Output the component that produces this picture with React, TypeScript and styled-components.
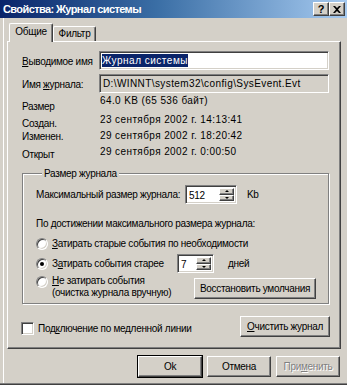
import styled, { createGlobalStyle, css } from "styled-components";

const GlobalStyle = createGlobalStyle`
  html, body {
    margin: 0;
    padding: 0;
    background: #d4d0c8;
  }
  body {
    font-family: "Liberation Sans", Arial, sans-serif;
    font-size: 10px;
    letter-spacing: -0.3px;
    color: #000;
    white-space: nowrap;
  }
`;

const raised = css`
  border-top: 1px solid #fff;
  border-left: 1px solid #fff;
  border-right: 1px solid #404040;
  border-bottom: 1px solid #404040;
  box-shadow: inset -1px -1px #808080;
`;

const sunken = css`
  border-top: 1px solid #808080;
  border-left: 1px solid #808080;
  border-right: 1px solid #fff;
  border-bottom: 1px solid #fff;
  box-shadow: inset 1px 1px #404040, inset -1px -1px #d4d0c8;
`;

const App = () => {
  return (
    <>
      <GlobalStyle />
      <Window>
        <TitleBar>
          <Title>Свойства: Журнал системы</Title>
          <CaptionButtons>
            <CaptionButton type="button">?</CaptionButton>
            <CaptionButton type="button">
              <svg width="8" height="7" viewBox="0 0 8 7">
                <path d="M0 0h2l2 2 2-2h2L5 3.5 8 7H6L4 5 2 7H0l3-3.5z" fill="#000" />
              </svg>
            </CaptionButton>
          </CaptionButtons>
        </TitleBar>

        <Body>
          <Tabs>
            <Tab $active>Общие</Tab>
            <Tab>Фильтр</Tab>
          </Tabs>

          <Panel>
            <FieldRow>
              <FieldLabel>
                <u>В</u>ыводимое имя
              </FieldLabel>
              <TextBox>
                <Selection>Журнал системы</Selection>
              </TextBox>
            </FieldRow>
            <FieldRow $top={4}>
              <FieldLabel>
                Имя <u>ж</u>урнала:
              </FieldLabel>
              <TextBox $readOnly>D:\WINNT\system32\config\SysEvent.Evt</TextBox>
            </FieldRow>

            <InfoRow $top={1}>
              <InfoLabel $shift={6}>Размер</InfoLabel>
              <InfoValue>64.0 KB (65 536 байт)</InfoValue>
            </InfoRow>
            <InfoRow $top={5}>
              <InfoLabel $shift={4}>Создан.</InfoLabel>
              <InfoValue>23 сентября 2002 г. 14:13:41</InfoValue>
            </InfoRow>
            <InfoRow $top={2}>
              <InfoLabel $shift={1}>Изменен.</InfoLabel>
              <InfoValue>29 сентября 2002 г. 18:20:42</InfoValue>
            </InfoRow>
            <InfoRow $top={2}>
              <InfoLabel $shift={3}>Открыт</InfoLabel>
              <InfoValue $clip>29 сентября 2002 г. 0:00:50</InfoValue>
            </InfoRow>

            <GroupBox>
              <Legend>Размер журнала</Legend>
              <SizeRow>
                <SizeLabel>Максимальный размер журнала:</SizeLabel>
                <SpinBox $width={52}>
                  <SpinText>512</SpinText>
                  <SpinButtons>
                    <SpinButton>
                      <ArrowUp />
                    </SpinButton>
                    <SpinButton>
                      <ArrowDown />
                    </SpinButton>
                  </SpinButtons>
                </SpinBox>
                <Unit>Kb</Unit>
              </SizeRow>
              <GroupText>По достижении максимального размера журнала:</GroupText>

              <RadioRow $top={6}>
                <Radio />
                <RadioLabel>
                  <u>З</u>атирать старые события по необходимости
                </RadioLabel>
              </RadioRow>
              <RadioRow $top={3}>
                <Radio $checked />
                <RadioLabel $width={121}>
                  З<u>а</u>тирать события старее
                </RadioLabel>
                <SpinBox $width={37}>
                  <SpinText>7</SpinText>
                  <SpinButtons>
                    <SpinButton>
                      <ArrowUp />
                    </SpinButton>
                    <SpinButton>
                      <ArrowDown />
                    </SpinButton>
                  </SpinButtons>
                </SpinBox>
                <Unit>дней</Unit>
              </RadioRow>
              <LastRow>
                <RadioRow $top={0} $align="flex-start">
                  <Radio $top={1} />
                  <RadioLabel $lines>
                    <u>Н</u>е затирать события
                    <br />
                    (очистка журнала вручную)
                  </RadioLabel>
                </RadioRow>
                <Button type="button" $width={122} $top={3}>
                  Восстановить умолчания
                </Button>
              </LastRow>
            </GroupBox>

            <FooterRow>
              <CheckRow>
                <CheckBox />
                <span>
                  Под<u>к</u>лючение по медленной линии
                </span>
              </CheckRow>
              <Button type="button" $width={90}>
                <u>О</u>чистить журнал
              </Button>
            </FooterRow>
          </Panel>

          <DialogButtons>
            <Button type="button" $width={64} $default>
              Ok
            </Button>
            <Button type="button" $width={64}>
              Отмена
            </Button>
            <Button type="button" $width={64} disabled>
              При<u>м</u>енить
            </Button>
          </DialogButtons>
        </Body>
      </Window>
    </>
  );
};

const Window = styled.div`
  width: 347px;
  height: 385px;
  box-sizing: border-box;
  background: #d4d0c8;
  display: flex;
  flex-direction: column;
  border-bottom: 1px solid #404040;
  box-shadow: inset 0 -1px #808080, inset 3px 0 #d4d0c8, inset 4px 0 #fff;
  overflow: hidden;
`;

const TitleBar = styled.div`
  height: 18px;
  flex: none;
  display: flex;
  align-items: center;
  justify-content: space-between;
  padding: 0 2px 0 3px;
  background: linear-gradient(90deg, #0a246a 0%, #3a6ea5 45%, #a6caf0 100%);
`;

const Title = styled.span`
  color: #fff;
  font-weight: bold;
  font-size: 11px;
  letter-spacing: -0.6px;
`;

const CaptionButtons = styled.div`
  display: flex;
`;

const CaptionButton = styled.button`
  ${raised};
  width: 16px;
  height: 14px;
  padding: 0;
  background: #d4d0c8;
  display: flex;
  align-items: center;
  justify-content: center;
  font-family: "Liberation Sans", Arial, sans-serif;
  font-weight: bold;
  font-size: 11px;
  line-height: 1;
  color: #000;
`;

const Body = styled.div`
  display: flex;
  flex-direction: column;
  padding: 5px 0 0 7px;
`;

const Tabs = styled.div`
  display: flex;
  align-items: flex-end;
  height: 18px;
  padding-left: 2px;
  position: relative;
  z-index: 1;
`;

const Tab = styled.div<{ $active?: boolean }>`
  box-sizing: border-box;
  display: flex;
  align-items: center;
  justify-content: center;
  background: #d4d0c8;
  border-top: 1px solid #fff;
  border-left: 1px solid #fff;
  border-right: 1px solid #404040;
  border-radius: 2px 2px 0 0;
  box-shadow: inset -1px 0 #808080;
  width: ${(p) => (p.$active ? 44 : 43)}px;
  height: ${(p) => (p.$active ? 19 : 15)}px;
  margin-bottom: ${(p) => (p.$active ? -1 : 0)}px;
  padding-bottom: ${(p) => (p.$active ? 3 : 1)}px;
`;

const Panel = styled.div`
  box-sizing: border-box;
  width: 334px;
  height: 308px;
  display: flex;
  flex-direction: column;
  padding: 9px 10px 0 14px;
  border-top: 1px solid #fff;
  border-left: 1px solid #fff;
  border-right: 1px solid #404040;
  border-bottom: 1px solid #404040;
  box-shadow: inset -1px -1px #808080;
`;

const FieldRow = styled.div<{ $top?: number }>`
  display: flex;
  align-items: center;
  margin-top: ${(p) => p.$top ?? 0}px;
`;

const FieldLabel = styled.span`
  width: 77px;
  flex: none;
  padding-top: 2px;
`;

const TextBox = styled.div<{ $readOnly?: boolean }>`
  ${sunken};
  box-sizing: border-box;
  width: 230px;
  height: 19px;
  display: flex;
  align-items: center;
  padding: 0 3px 0 ${(p) => (p.$readOnly ? 3 : 2)}px;
  overflow: hidden;
  background: ${(p) => (p.$readOnly ? "#d4d0c8" : "#fff")};
  letter-spacing: ${(p) => (p.$readOnly ? "0.4px" : "inherit")};
`;

const Selection = styled.span`
  background: #0a246a;
  color: #fff;
  line-height: 13px;
  letter-spacing: 0.5px;
`;

const InfoRow = styled.div<{ $top: number }>`
  display: flex;
  align-items: flex-start;
  height: 14px;
  line-height: 14px;
  margin-top: ${(p) => p.$top}px;
`;

const InfoLabel = styled.span<{ $shift: number }>`
  width: 78px;
  flex: none;
  margin-top: ${(p) => p.$shift}px;
`;

const InfoValue = styled.span<{ $clip?: boolean }>`
  overflow: hidden;
  letter-spacing: 0.4px;
  height: ${(p) => (p.$clip ? 11 : 14)}px;
`;

const GroupBox = styled.fieldset`
  margin: 8px 0 0 0;
  width: 307px;
  box-sizing: border-box;
  padding: 0 12px 4px 13px;
  border: 1px solid #808080;
  box-shadow: inset 1px 1px #fff, 1px 1px #fff;
  display: flex;
  flex-direction: column;
`;

const Legend = styled.legend`
  margin-left: 6px;
  padding: 0 2px;
  line-height: 13px;
  background: #d4d0c8;
`;

const SizeRow = styled.div`
  display: flex;
  align-items: center;
  margin-top: 5px;
`;

const SizeLabel = styled.span`
  width: 149px;
`;

const Unit = styled.span`
  margin-left: 10px;
`;

const GroupText = styled.div`
  margin-top: 13px;
  line-height: 14px;
`;

const SpinBox = styled.div<{ $width: number }>`
  ${sunken};
  box-sizing: border-box;
  width: ${(p) => p.$width}px;
  height: 19px;
  display: flex;
  align-items: stretch;
  background: #fff;
  padding: 2px;
`;

const SpinText = styled.span`
  flex: 1;
  line-height: 15px;
  padding-left: 1px;
`;

const SpinButtons = styled.div`
  display: flex;
  flex-direction: column;
  width: 15px;
`;

const SpinButton = styled.div`
  ${raised};
  box-sizing: border-box;
  flex: 1;
  background: #d4d0c8;
  display: flex;
  align-items: center;
  justify-content: center;
`;

const ArrowUp = styled.span`
  width: 0;
  height: 0;
  border-left: 2px solid transparent;
  border-right: 2px solid transparent;
  border-bottom: 2px solid #000;
`;

const ArrowDown = styled.span`
  width: 0;
  height: 0;
  border-left: 2px solid transparent;
  border-right: 2px solid transparent;
  border-top: 2px solid #000;
`;

const RadioRow = styled.div<{ $top: number; $align?: string }>`
  display: flex;
  align-items: ${(p) => p.$align ?? "center"};
  margin-top: ${(p) => p.$top}px;
  gap: 4px;
`;

const Radio = styled.span<{ $checked?: boolean; $top?: number }>`
  position: relative;
  box-sizing: border-box;
  width: 12px;
  height: 12px;
  flex: none;
  margin-top: ${(p) => p.$top ?? 0}px;
  border-radius: 50%;
  background: #fff;
  border-top: 1px solid #808080;
  border-left: 1px solid #808080;
  border-right: 1px solid #fff;
  border-bottom: 1px solid #fff;
  box-shadow: inset 1px 1px #404040, inset -1px -1px #d4d0c8;

  &::after {
    content: "";
    display: ${(p) => (p.$checked ? "block" : "none")};
    position: absolute;
    left: 3px;
    top: 3px;
    width: 4px;
    height: 4px;
    border-radius: 50%;
    background: #000;
  }
`;

const RadioLabel = styled.span<{ $width?: number; $lines?: boolean }>`
  line-height: ${(p) => (p.$lines ? 12 : 14)}px;
  width: ${(p) => (p.$width ? `${p.$width}px` : "auto")};
`;

const LastRow = styled.div`
  display: flex;
  align-items: flex-start;
  justify-content: space-between;
  margin-top: 2px;
`;

const Button = styled.button<{ $width: number; $top?: number; $default?: boolean }>`
  ${raised};
  box-sizing: border-box;
  width: ${(p) => p.$width}px;
  height: 21px;
  margin-top: ${(p) => p.$top ?? 0}px;
  padding: 0;
  background: #d4d0c8;
  font-family: inherit;
  font-size: inherit;
  letter-spacing: inherit;
  color: #000;

  ${(p) =>
    p.$default &&
    css`
      outline: 1px solid #000;
    `}

  &:disabled {
    color: #808080;
    text-shadow: 1px 1px #fff;
  }
`;

const FooterRow = styled.div`
  display: flex;
  align-items: center;
  justify-content: space-between;
  margin-top: 12px;
`;

const CheckRow = styled.div`
  display: flex;
  align-items: center;
  gap: 4px;
  margin-top: 4px;
  margin-left: -1px;
`;

const CheckBox = styled.span`
  ${sunken};
  box-sizing: border-box;
  width: 13px;
  height: 13px;
  background: #fff;
`;

const DialogButtons = styled.div`
  display: flex;
  justify-content: flex-end;
  gap: 5px;
  margin-top: 7px;
  padding-right: 7px;
`;

export default App;
